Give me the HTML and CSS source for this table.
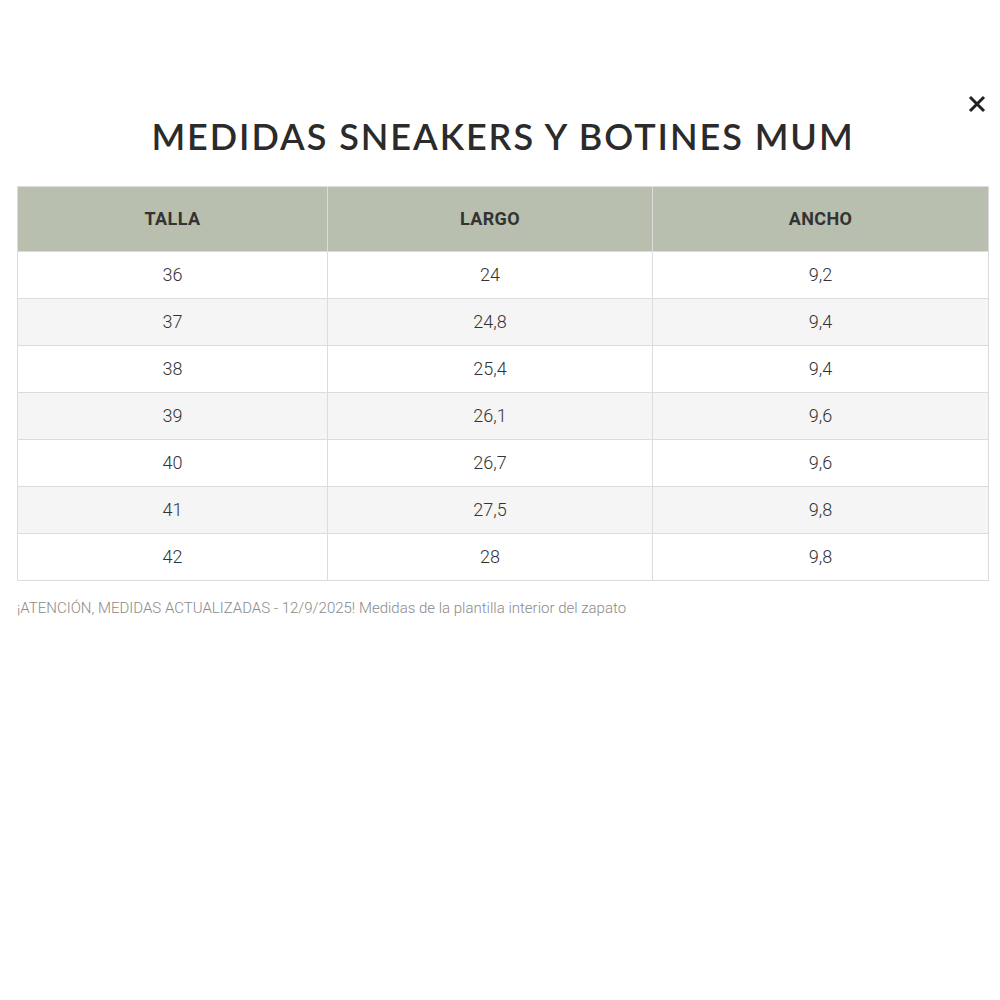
FILE: index.html
```html
<!DOCTYPE html>
<html lang="es">
<head>
<meta charset="utf-8">
<title>Medidas Sneakers y Botines Mum</title>
<link rel="stylesheet" href="styles.css">
</head>
<body>
<div class="modal">
  <button class="close" aria-label="Cerrar">
    <svg width="18" height="18" viewBox="0 0 18 18"><path d="M2 2L16 16M16 2L2 16" stroke="#222" stroke-width="3" stroke-linecap="butt"/></svg>
  </button>
  <h1 class="title">MEDIDAS SNEAKERS Y BOTINES MUM</h1>
  <table class="sizes">
    <colgroup><col class="c1"><col class="c2"><col class="c3"></colgroup>
    <thead>
      <tr><th>TALLA</th><th>LARGO</th><th>ANCHO</th></tr>
    </thead>
    <tbody>
      <tr><td>36</td><td>24</td><td>9,2</td></tr>
      <tr><td>37</td><td>24,8</td><td>9,4</td></tr>
      <tr><td>38</td><td>25,4</td><td>9,4</td></tr>
      <tr><td>39</td><td>26,1</td><td>9,6</td></tr>
      <tr><td>40</td><td>26,7</td><td>9,6</td></tr>
      <tr><td>41</td><td>27,5</td><td>9,8</td></tr>
      <tr><td>42</td><td>28</td><td>9,8</td></tr>
    </tbody>
  </table>
  <p class="note">¡ATENCIÓN, MEDIDAS ACTUALIZADAS - 12/9/2025! Medidas de la plantilla interior del zapato</p>
</div>
</body>
</html>
```
FILE: styles.css
```css
html, body {
  margin: 0;
  padding: 0;
  background: #fff;
}
body {
  font-family: Roboto, "Liberation Sans", sans-serif;
  color: #333;
}
.modal {
  position: relative;
  margin: 0 11px 0 17px;
  padding-top: 112px;
}
.close {
  position: absolute;
  top: 95px;
  right: 3px;
  width: 18px;
  height: 18px;
  padding: 0;
  border: 0;
  background: none;
  cursor: pointer;
}
.close svg { display: block; }
.title {
  margin: 0 0 26px;
  text-align: center;
  font-family: Lato, "Noto Sans", sans-serif;
  font-weight: 600;
  font-size: 36px;
  line-height: 48px;
  letter-spacing: 1.95px;
  color: #2b2b2b;
}
.sizes {
  width: 100%;
  border-collapse: collapse;
  table-layout: fixed;
}
.c1 { width: 310px; }
.c2 { width: 325px; }
.sizes th, .sizes td {
  border: 1px solid #dcdcdc;
  text-align: center;
}
.sizes th {
  background: #b8bfae;
  font-weight: 700;
  font-size: 18px;
  letter-spacing: 0.4px;
  height: 62px;
  padding: 0 0 2px;
  color: #333;
}
.sizes td {
  height: 44px;
  padding: 0 0 2px;
  font-size: 18px;
  color: #333;
  font-weight: 300;
}
.sizes tbody tr:nth-child(even) td { background: #f5f5f5; }
.note {
  margin: 18px 0 0;
  font-size: 15px;
  font-weight: 300;
  color: #8a8a8a;
  line-height: 18px;
}
```
